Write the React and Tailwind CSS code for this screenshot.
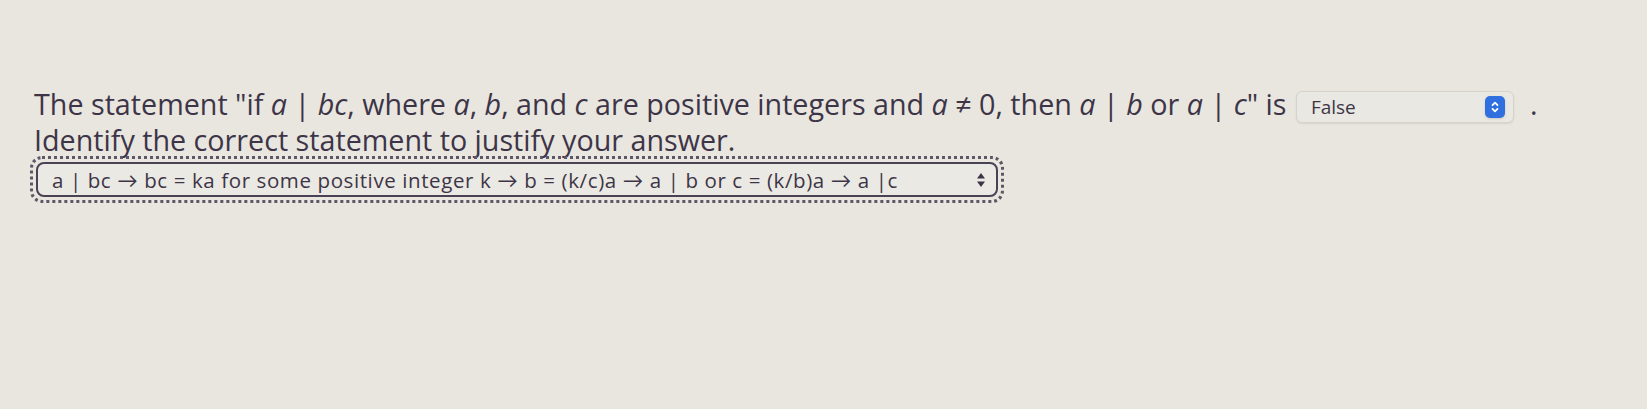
import { useState } from 'react';

const ink = 'text-[#3d3547]';

// blue macOS-style stepper icon used in the answer dropdown
const BlueChevrons = () => (
  <span className="flex h-[22px] w-[20px] items-center justify-center rounded-[5px] bg-[#2f6fe0] shadow-sm">
    <svg width="10" height="14" viewBox="0 0 10 14" fill="none" stroke="white" strokeWidth="1.8" strokeLinecap="round" strokeLinejoin="round">
      <path d="M2.5 5.2 5 2.7 7.5 5.2" />
      <path d="M2.5 8.8 5 11.3 7.5 8.8" />
    </svg>
  </span>
);

const Var = ({ children }) => <i className="italic">{children}</i>;

export default function App() {
  const [answer] = useState('False');
  const [reason] = useState(
    'a | bc → bc = ka for some positive integer k → b = (k/c)a → a | b or c = (k/b)a → a |c'
  );

  return (
    <div
      className={`min-h-[409px] w-full bg-[#e8e6df] pl-[34px] pt-[87px] ${ink}`}
      style={{ fontFamily: '"Open Sans", Lato, sans-serif' }}
    >
      <p className="text-[28.7px] leading-[34px] whitespace-nowrap">
        The statement "if <Var>a</Var> | <Var>bc</Var>, where <Var>a</Var>, <Var>b</Var>, and <Var>c</Var> are
        positive integers and <Var>a</Var> ≠ 0, then <Var>a</Var> | <Var>b</Var> or <Var>a</Var> | <Var>c</Var>" is{' '}
        <span className="ml-[2px] inline-flex h-[32px] w-[218px] items-center justify-between rounded-[6px] border border-[#d6d3cb] bg-[#eae8e2] pl-[14px] pr-[8px] align-middle shadow-[0_1px_2px_rgba(0,0,0,0.08)]">
          <span className="text-[19px] leading-none">{answer}</span>
          <BlueChevrons />
        </span>
        <span className="ml-[16px]">.</span>
      </p>
      <p className="text-[28.7px] leading-[34px]">Identify the correct statement to justify your answer.</p>

      <div className="ml-[-4px] mt-[-1px] inline-block rounded-[12px] border-[3px] border-dotted border-[#5d5868] p-[3px]">
        <div className="flex h-[35px] w-[962px] items-center justify-between rounded-[8px] border-2 border-[#4a4155] bg-[#ebe9e3] pl-[14px] pr-[10px]">
          <span className="text-[20.5px] leading-none tracking-[0.6px] whitespace-nowrap">{reason}</span>
          <svg width="10" height="18" viewBox="0 0 10 18" fill="#3d3547">
            <path d="M5 2 9 7.5H1z" />
            <path d="M5 16 9 10.5H1z" />
          </svg>
        </div>
      </div>
    </div>
  );
}
